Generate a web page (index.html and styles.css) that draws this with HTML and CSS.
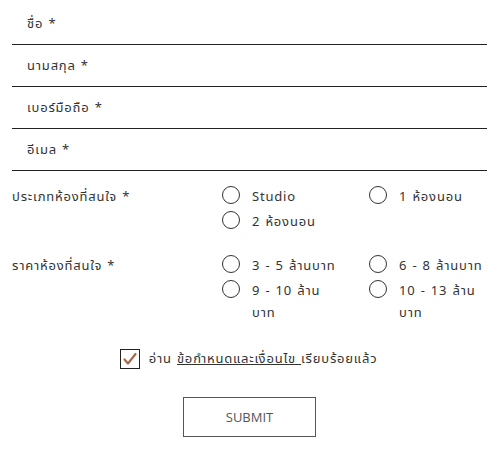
FILE: index.html
```html
<!DOCTYPE html>
<html>
<head>
    <link rel="stylesheet" href="styles.css">
</head>
<body>
    <form class="contact-form">
        <div class="field"><span class="field-label">ชื่อ *</span></div>
        <div class="field"><span class="field-label">นามสกุล *</span></div>
        <div class="field"><span class="field-label">เบอร์มือถือ *</span></div>
        <div class="field"><span class="field-label">อีเมล *</span></div>

        <div class="choice-group">
            <div class="group-label">ประเภทห้องที่สนใจ *</div>
            <div class="options">
                <label class="option"><span class="radio"></span><span>Studio</span></label>
                <label class="option"><span class="radio"></span><span>1 ห้องนอน</span></label>
                <label class="option"><span class="radio"></span><span>2 ห้องนอน</span></label>
            </div>
        </div>

        <div class="choice-group">
            <div class="group-label">ราคาห้องที่สนใจ *</div>
            <div class="options">
                <label class="option"><span class="radio"></span><span>3 - 5 ล้านบาท</span></label>
                <label class="option"><span class="radio"></span><span>6 - 8 ล้านบาท</span></label>
                <label class="option"><span class="radio"></span><span>9 - 10 ล้าน<br>บาท</span></label>
                <label class="option"><span class="radio"></span><span>10 - 13 ล้าน<br>บาท</span></label>
            </div>
        </div>

        <div class="agree">
            <span class="checkbox">
                <svg width="14" height="14" viewBox="0 0 14 14"><path d="M1.5 7.5 L5 11.5 L12.5 2" fill="none" stroke="#a5694f" stroke-width="2.2" stroke-linecap="round" stroke-linejoin="round"/></svg>
            </span>
            <span>อ่าน <a href="#" class="terms">ข้อกำหนดและเงื่อนไข </a>เรียบร้อยแล้ว</span>
        </div>

        <div class="actions">
            <button type="button" class="submit">SUBMIT</button>
        </div>
    </form>
</body>
</html>
```

FILE: styles.css
```css
body {
    margin: 0;
    font-family: "Noto Sans", "Noto Sans Thai", "Liberation Sans", sans-serif;
    font-size: 13px;
    letter-spacing: 0.8px;
    word-spacing: 1px;
    color: #333;
    background: #fff;
}

.contact-form {
    width: 475px;
    margin-left: 12px;
    padding-top: 3px;
}

.field {
    height: 41px;
    border-bottom: 1px solid #222;
    display: flex;
    align-items: center;
    padding-left: 15px;
}

.choice-group {
    display: flex;
    margin-top: 14px;
}

.choice-group + .choice-group {
    margin-top: 22px;
}

.group-label {
    width: 210px;
    line-height: 22px;
}

.options {
    display: grid;
    grid-template-columns: 147px 118px;
    row-gap: 3px;
}

.option {
    display: flex;
    align-items: flex-start;
    line-height: 22px;
    padding-right: 2px;
}

.radio {
    flex: none;
    width: 16px;
    height: 16px;
    border: 1.5px solid #333;
    border-radius: 50%;
    margin: 1px 12px 0 0;
}

.agree {
    display: flex;
    align-items: center;
    justify-content: center;
    margin-top: 26px;
    padding-right: 2px;
}

.checkbox {
    width: 18px;
    height: 18px;
    border: 1px solid #222;
    display: flex;
    align-items: center;
    justify-content: center;
    margin-right: 9px;
}

.terms {
    color: #333;
    text-decoration: underline;
}

.actions {
    display: flex;
    justify-content: center;
    margin-top: 28px;
}

.submit {
    width: 133px;
    height: 40px;
    background: #fff;
    border: 1px solid #555;
    color: #555;
    font-family: "Open Sans", "Liberation Sans", sans-serif;
    font-size: 13px;
    letter-spacing: 0;
}
```
